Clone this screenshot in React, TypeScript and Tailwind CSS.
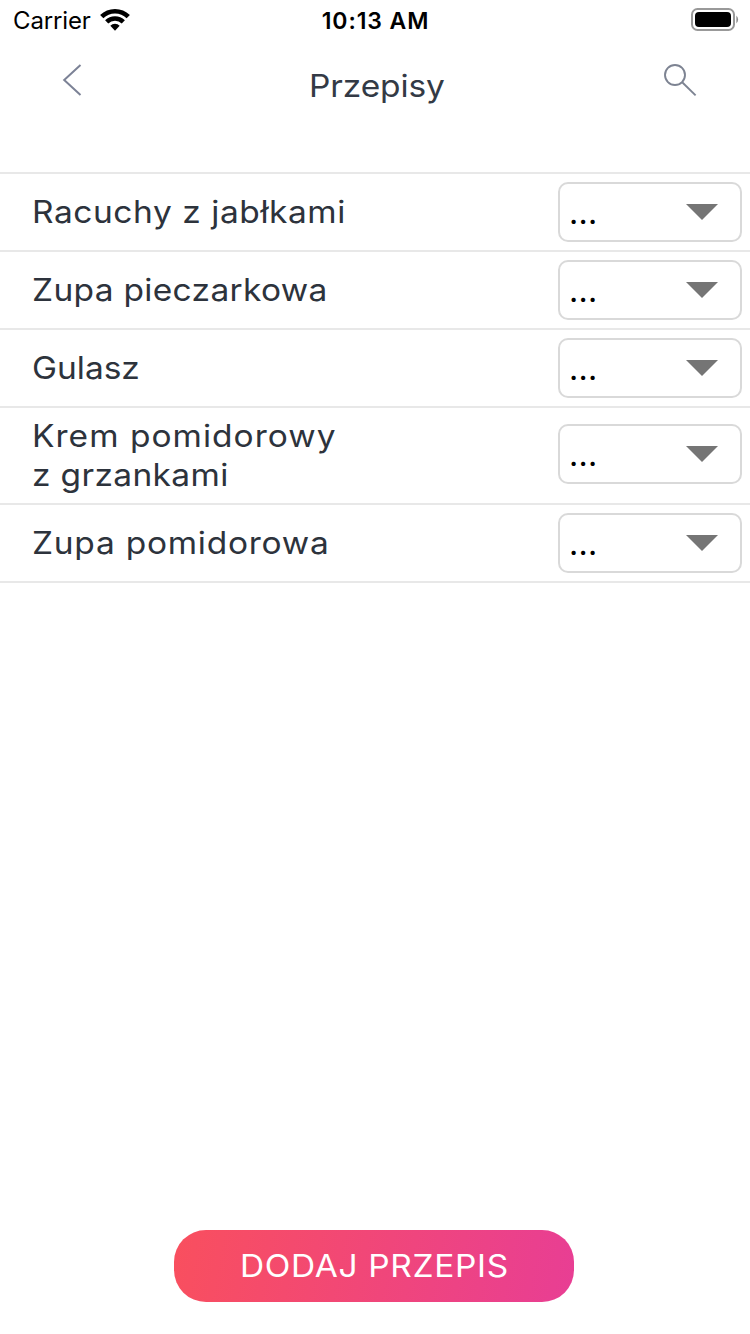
const recipes = [
  { lines: ["Racuchy z jabłkami"], spacing: ["tracking-[0.52px]"] },
  { lines: ["Zupa pieczarkowa"], spacing: ["tracking-[0.3px]"] },
  { lines: ["Gulasz"], spacing: ["tracking-[0px]"] },
  { lines: ["Krem pomidorowy", "z grzankami"], spacing: ["tracking-[0.95px]", "tracking-[0.33px]"] },
  { lines: ["Zupa pomidorowa"], spacing: ["tracking-[0.7px]"] },
];

function StatusBar() {
  return (
    <div className="grid h-10 grid-cols-3 items-center pr-[11px] pl-[13px] text-black">
      <div className="flex items-center gap-[9px]">
        <span className="pt-[2px] text-[24px] leading-[38px] tracking-[-0.15px]">Carrier</span>
        <svg width="30" height="24" viewBox="0 0 31 24" fill="none" stroke="#000">
          <path d="M1.8 8.6a19.4 19.4 0 0 1 27.4 0" strokeWidth="4.8" />
          <path d="M6.9 14a12.2 12.2 0 0 1 17.2 0" strokeWidth="4.6" />
          <path d="M10.7 18a6.5 6.5 0 0 1 9.6 0l-4.8 5z" fill="#000" stroke="none" />
        </svg>
      </div>
      <span className="pt-[2px] pr-px text-center text-[23px] leading-[38px] font-semibold tracking-[0.9px]">10:13 AM</span>
      <svg className="justify-self-end" width="48" height="24" viewBox="0 0 48 24">
        <rect x="1" y="1" width="42" height="21" rx="5.5" fill="none" stroke="#999" strokeWidth="2" />
        <rect x="4" y="4" width="36" height="15" rx="4" fill="#000" />
        <path d="M45.4 7.6q3.4 3.9 0 7.8z" fill="#888" />
      </svg>
    </div>
  );
}

function Header() {
  return (
    <header className="flex h-[132px] items-start justify-between pr-[53px] pl-[62px]">
      <button aria-label="Wstecz" className="mt-[24px]">
        <svg width="20" height="32" viewBox="0 0 20 32" fill="none" stroke="#7c8296" strokeWidth="2">
          <path d="M18.5 1 2.2 16 18.5 31" />
        </svg>
      </button>
      <h1 className="mt-[26px] ml-[8px] scale-x-108 text-[31px] leading-10 tracking-[-0.1px] text-[#333a45]">Przepisy</h1>
      <button aria-label="Szukaj" className="mt-[24px]">
        <svg width="34" height="34" viewBox="0 0 34 34" fill="none" stroke="#7d8392" strokeWidth="1.9">
          <circle cx="12" cy="11" r="10" />
          <path d="M19.2 18.2 32.6 31.4" />
        </svg>
      </button>
    </header>
  );
}

function Select() {
  return (
    <button className="flex h-[60px] w-[184px] shrink-0 items-center justify-between rounded-[10px] border-2 border-[#d9d9d9] pr-[22px] pl-[9px]">
      <span className="mt-[2px] text-[32px] leading-9 tracking-[0.3px] text-black">...</span>
      <svg width="32" height="16" viewBox="0 0 32 16">
        <path d="M0 0h32L16 16z" fill="#757575" />
      </svg>
    </button>
  );
}

export default function App() {
  return (
    <div className="flex h-[1334px] w-[750px] flex-col bg-white font-['Inter','Liberation_Sans',sans-serif]">
      <StatusBar />
      <Header />
      <ul className="border-t-2 border-[#e8e8e8]">
        {recipes.map(({ lines, spacing }) => (
          <li
            key={lines[0]}
            className={`flex justify-between border-b-2 border-[#e8e8e8] pr-2 pl-8 ${
              lines.length > 1 ? "h-[97px] items-start pt-2" : "h-[78px] items-center"
            }`}
          >
            <div
              className={`flex origin-left scale-x-108 flex-col items-start text-[31px] leading-[39px] text-[#2d333c] ${
                lines.length > 1 ? "" : "pb-[2px]"
              }`}
            >
              {lines.map((line, i) => (
                <span key={line} className={spacing[i]}>
                  {line}
                </span>
              ))}
            </div>
            <div className={lines.length > 1 ? "mt-2" : ""}>
              <Select />
            </div>
          </li>
        ))}
      </ul>
      <button className="mt-auto mr-[2px] mb-8 h-[72px] w-[400px] self-center rounded-[32px] bg-linear-[100deg,#f94f5e,#e83e94] text-[31px] text-white">
        <span className="inline-block scale-x-108 tracking-[0.6px]">DODAJ PRZEPIS</span>
      </button>
    </div>
  );
}
